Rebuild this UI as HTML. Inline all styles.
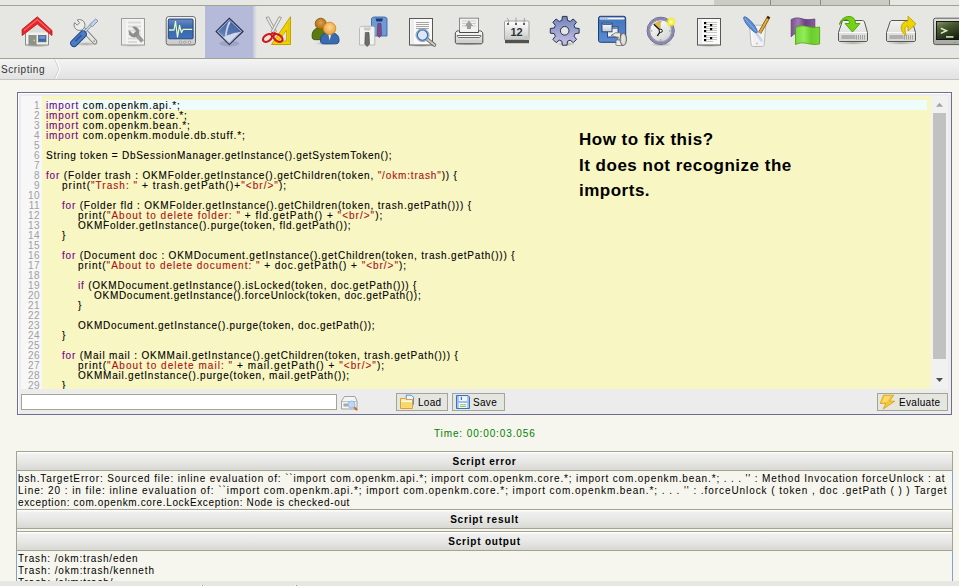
<!DOCTYPE html>
<html><head><meta charset="utf-8">
<style>
*{margin:0;padding:0;box-sizing:border-box}
html,body{width:959px;height:586px;overflow:hidden;background:#f6f6ee;font-family:"Liberation Sans",sans-serif;position:relative}
.abs{position:absolute}
#topstrip{left:0;top:0;width:959px;height:5px;background:#e6e6e2}
.tab{position:absolute;top:0;height:5px;background:#cbccc5;border-right:1px solid #8a8a80}
#l1{left:0;top:5px;width:959px;height:1px;background:#a2a390}
#toolbar{left:0;top:6px;width:959px;height:52px;background:#e6e7e2}
#sel{left:205px;top:6px;width:48px;height:52px;background:#b5bad8}
#l2{left:0;top:58px;width:959px;height:1px;background:#a2a390}
#crumb{left:0;top:59px;width:959px;height:20px;background:linear-gradient(#f4f4f4,#e2e2e2)}
#l3{left:0;top:79px;width:959px;height:1px;background:#c4c4c6}
#crumbtxt{left:1px;top:64px;font-size:10px;line-height:12px;color:#333;letter-spacing:0.57px}
#editor{left:17px;top:92px;width:935px;height:323px;border:1px solid #6e6e92;background:#ececec}
#editor:before{content:"";position:absolute;left:0;top:0;right:0;bottom:0;border-top:1px solid #fff;border-left:1px solid #fff}
#gutter{left:21px;top:96px;width:21px;height:293px;background:#f7f7f7}
#code{left:42px;top:96px;width:889px;height:293px;background:#f8f6c3;overflow:hidden}
#hl{left:4px;top:4px;width:881px;height:10px;background:#effcfc}
.ln{position:absolute;left:0;width:19px;text-align:right;font-size:10px;letter-spacing:0.4px;line-height:10px;color:#a0a0a0}
.cl{position:absolute;font-family:"Liberation Sans",sans-serif;font-size:10px;line-height:10px;letter-spacing:0.8px;color:#000;white-space:pre;-webkit-text-stroke:0.1px currentColor}
.k{color:#770088}.s{color:#aa1111}
#note{left:579px;top:127px;font-weight:bold;font-size:17px;line-height:25.5px;color:#000;letter-spacing:0.5px}
#sb{left:931px;top:96px;width:17px;height:293px;background:#f1f1f1}
#thumb{left:933px;top:113px;width:13px;height:246px;background:#c1c1c1}
#input{left:21px;top:394px;width:316px;height:16px;background:#fff;border:1px solid #a5a595}
.btn{position:absolute;top:393px;height:18px;border:1px solid #a5a595;background:#e6e6e0;font-size:10px;line-height:12px;color:#000;letter-spacing:0.3px}
.btn span{position:absolute;top:3px}
#time{left:434px;top:428px;font-size:10px;line-height:12px;color:#008000;letter-spacing:0.88px}
.hdr{position:absolute;left:16px;width:937px;height:20px;border:1px solid #a2a390;background:linear-gradient(#fdfdfb 0px,#fdfdfb 1px,#f0f0f0 2px,#e8e8e6 50%,#d8d8d4 100%);text-align:center;font-weight:bold;font-size:10px;line-height:18px;padding-top:1px;color:#000;letter-spacing:0.8px}
.cnt{position:absolute;left:16px;width:937px;border-left:1px solid #7ea6cc;border-right:1px solid #7ea6cc;background:#f6f6ee}
.tl{position:absolute;left:18px;font-size:10px;line-height:12px;color:#000;white-space:pre}
#bottom{left:0;top:581px;width:959px;height:5px;background:#e6e6e2}
</style></head><body>
<div id="topstrip" class="abs"></div>
<div class="tab" style="left:714px;width:57px"></div>
<div class="tab" style="left:771px;width:50px"></div>
<div class="tab" style="left:821px;width:69px"></div>
<div id="l1" class="abs"></div>
<div id="toolbar" class="abs"></div>
<div id="sel" class="abs"></div>
<div class="abs" style="left:253px;top:6px;width:4px;height:52px;background:linear-gradient(90deg,#c4c7da,#e6e7e2)"></div>
<svg class="abs" style="left:0;top:0" width="959" height="58" viewBox="0 0 959 58">
<defs>
<linearGradient id="gBlueScr" x1="0" y1="0" x2="0" y2="1"><stop offset="0" stop-color="#6a8cc4"/><stop offset="0.45" stop-color="#3a66a8"/><stop offset="1" stop-color="#3e72bc"/></linearGradient>
<linearGradient id="gGray" x1="0" y1="0" x2="0" y2="1"><stop offset="0" stop-color="#ffffff"/><stop offset="1" stop-color="#c8c8c6"/></linearGradient>
<linearGradient id="gDrive" x1="0" y1="0" x2="0" y2="1"><stop offset="0" stop-color="#f2f2f2"/><stop offset="1" stop-color="#d6d6d4"/></linearGradient>
<linearGradient id="gDiamond" x1="0.7" y1="0" x2="0.3" y2="1"><stop offset="0" stop-color="#3c5c9c"/><stop offset="0.6" stop-color="#5a78b4"/><stop offset="1" stop-color="#a8b6d4"/></linearGradient>
<linearGradient id="gGear" x1="0" y1="0" x2="0" y2="1"><stop offset="0" stop-color="#6f84bc"/><stop offset="1" stop-color="#c9c2e4"/></linearGradient>
<linearGradient id="gWin" x1="0" y1="0" x2="0" y2="1"><stop offset="0" stop-color="#4474b8"/><stop offset="1" stop-color="#5a8ad0"/></linearGradient>
<linearGradient id="gTerm" x1="0" y1="0" x2="0.6" y2="1"><stop offset="0" stop-color="#8a9a6c"/><stop offset="0.35" stop-color="#4c5c34"/><stop offset="1" stop-color="#161e0c"/></linearGradient>
<linearGradient id="gTermFrame" x1="0" y1="0" x2="0" y2="1"><stop offset="0" stop-color="#e0e0de"/><stop offset="1" stop-color="#a4a4a2"/></linearGradient>
<linearGradient id="gGreenFlag" x1="0" y1="0" x2="1" y2="0"><stop offset="0" stop-color="#76d83c"/><stop offset="0.35" stop-color="#92ec58"/><stop offset="0.65" stop-color="#6ccc2c"/><stop offset="1" stop-color="#7ad83a"/></linearGradient>
<linearGradient id="gPurpleFlag" x1="0" y1="0" x2="1" y2="0"><stop offset="0" stop-color="#7c5090"/><stop offset="0.3" stop-color="#a07ab4"/><stop offset="0.6" stop-color="#6a4080"/><stop offset="1" stop-color="#8a5ea0"/></linearGradient>
<radialGradient id="gHeadB" cx="0.5" cy="0.4" r="0.6"><stop offset="0" stop-color="#e0a050"/><stop offset="1" stop-color="#a86a10"/></radialGradient>
<radialGradient id="gHeadO" cx="0.5" cy="0.4" r="0.6"><stop offset="0" stop-color="#fcd49a"/><stop offset="1" stop-color="#eea032"/></radialGradient>
<radialGradient id="gGlow" cx="0.5" cy="0.5" r="0.5"><stop offset="0" stop-color="#ffffd0"/><stop offset="0.5" stop-color="#f4f030"/><stop offset="1" stop-color="#e8e820" stop-opacity="0"/></radialGradient>
<linearGradient id="gFace" x1="0.2" y1="0" x2="0.8" y2="1"><stop offset="0" stop-color="#ffffff"/><stop offset="1" stop-color="#d2d2d0"/></linearGradient>
<radialGradient id="gShadow" cx="0.5" cy="0.5" r="0.5"><stop offset="0" stop-color="#000" stop-opacity="0.28"/><stop offset="1" stop-color="#000" stop-opacity="0"/></radialGradient>
</defs>

<!-- 0 home -->
<g transform="translate(21,13)">
<ellipse cx="16" cy="32.5" rx="13" ry="2" fill="url(#gShadow)"/>
<path d="M4.5 32 L4.5 19 L16.3 9.5 L27.5 19 L27.5 32 Z" fill="#f0f0ee" stroke="#8a8c88" stroke-width="1"/>
<path d="M5.5 19.5 L16.3 11 L26.5 19.5 Z" fill="#dcdcda"/>
<rect x="7.5" y="22" width="8" height="10" fill="#888a85"/>
<rect x="8.5" y="22" width="6" height="10" fill="#8f918c"/>
<circle cx="13.3" cy="27.4" r="0.8" fill="#f0e030"/>
<rect x="17.5" y="22.5" width="7.5" height="6.3" fill="#3868b0" stroke="#666" stroke-width="0.8"/>
<rect x="18.2" y="23.2" width="6" height="2.5" fill="#7098d0"/>
<path d="M1 16.5 L16.3 3.8 L31 17.5 L31 22.5 L16.3 11 L1.2 22.5 Z" fill="#e8262a" stroke="#b8141a" stroke-width="0.8" stroke-linejoin="round"/>
<path d="M3 17.5 L16.3 6.5 L29 18" fill="none" stroke="#f46868" stroke-width="1.2"/>
</g>

<!-- 1 tools -->
<g transform="translate(69,13)">
<ellipse cx="17" cy="31" rx="13" ry="2" fill="url(#gShadow)"/>
<path d="M12 14 L25.8 28.8" stroke="#7a7c78" stroke-width="5.2" stroke-linecap="round"/>
<path d="M12 14 L25.8 28.8" stroke="#e6e6e4" stroke-width="3.4" stroke-linecap="round"/>
<circle cx="25.2" cy="28.2" r="0.9" fill="#9a9a98"/>
<path d="M8.1 7.05 A5.5 5.5 0 1 1 5.55 9.6 L8.17 12.21 L10.71 9.67 Z" fill="#ececea" stroke="#7a7c78" stroke-width="0.9" stroke-linejoin="round"/>
<path d="M13 21.5 L23 11" stroke="#7890b8" stroke-width="2.6" stroke-linecap="round"/>
<path d="M13 21.5 L23 11" stroke="#ccd8ec" stroke-width="1.3" stroke-linecap="round"/>
<path d="M21 11.5 L26.8 5.8 L29 8 L23.2 13.8 Z" fill="#c4d2ea" stroke="#7890b8" stroke-width="0.9" stroke-linejoin="round"/>
<path d="M5 30.2 L14 21.2" stroke="#1e4684" stroke-width="7.6" stroke-linecap="round"/>
<path d="M5 30.2 L14 21.2" stroke="#4c7cc4" stroke-width="5.8" stroke-linecap="round"/>
<path d="M6.8 27.8 L12 22.6" stroke="#2a5494" stroke-width="1.6" stroke-linecap="round"/>
</g>

<!-- 2 doc wrench (faded) -->
<g transform="translate(117,13)">
<ellipse cx="16" cy="32.5" rx="13" ry="1.6" fill="url(#gShadow)" opacity="0.6"/>
<rect x="4.5" y="5.5" width="23" height="26.5" fill="#f4f4f2" stroke="#9c9c9a" stroke-width="1"/>
<rect x="5.5" y="6.5" width="3.5" height="24.5" fill="#ebebe9"/>
<g stroke="#dadad8" stroke-width="1.8"><path d="M11 9.5H24M11 13.5H24M11 17.5H24M11 21.5H24M11 25.5H24M11 29H20"/></g>
<path d="M19 21.2 L25.5 28.5" stroke="#9a9a98" stroke-width="4" stroke-linecap="butt"/>
<path d="M15.07 13.96 A5.4 5.4 0 1 1 11.96 17.07 L16.01 21.12 L19.12 18.01 Z" fill="#8e8e8c"/>
</g>

<!-- 3 monitor -->
<g transform="translate(165,13)">
<rect x="1.2" y="3.6" width="29.3" height="28.4" rx="2.5" fill="url(#gGray)" stroke="#6a6a68" stroke-width="1"/>
<rect x="3.3" y="6" width="24.8" height="19.8" rx="1" fill="url(#gBlueScr)" stroke="#1a3a78" stroke-width="0.9"/>
<path d="M4 17 L9 17 L10.5 8.5 L12.5 24 L14.5 12.5 L16.5 19.5 L18.2 16.3 L27.3 16.3" fill="none" stroke="#e4f8c0" stroke-width="1.3" stroke-linejoin="round"/>
<g fill="#e8e8e6" stroke="#8a8a88" stroke-width="0.7"><circle cx="15.5" cy="29.2" r="1.2"/><rect x="18.5" y="28.2" width="2.6" height="2" rx="1"/><circle cx="24.5" cy="29.2" r="1.2"/></g>
</g>

<!-- 4 diamond (selected) -->
<g transform="translate(213,13)">
<ellipse cx="16.3" cy="30.5" rx="10" ry="3" fill="#8d92b8" opacity="0.55"/>
<path d="M16.3 5.2 L30.1 18.4 L16.3 31.6 L3.1 18.4 Z" fill="url(#gDiamond)" stroke="#2a3048" stroke-width="1.1" stroke-linejoin="miter"/>
<path d="M16.3 6.8 L28.5 18.4 L16.3 30 L4.7 18.4 Z" fill="none" stroke="#c8d0e4" stroke-width="0.7"/>
<path d="M16.2 8 C14.2 10.5 13 15.5 11.8 22.5 L13.6 23 C14.2 18.5 15.2 13.8 17.6 9.2 Z" fill="#c9d2e6"/>
<path d="M10.5 24.5 L12.8 22.5 C14.5 23 15.8 21 17.5 21.5 C19 20 20.5 20.8 21.8 19.8 C23.2 20 24.8 19.2 26.5 18.9 L28 18.4 L16.3 29.6 Z" fill="#d2d9ea"/>
</g>

<!-- 5 scissors + set square -->
<g transform="translate(261,13)">
<path d="M29.5 3.7 L29.5 31.5 L10.5 31.5 Z" fill="#edd400" stroke="#c4a000" stroke-width="1" stroke-linejoin="round"/>
<path d="M25.5 17 L25.5 28 L17.5 28 Z" fill="#e5e5e0" stroke="#c4a000" stroke-width="0.8"/>
<g stroke="#e0c000" stroke-width="0.8"><path d="M27.3 8V29.5M29 10h-1.5M29 13h-1.5M29 16h-1.5M29 19h-1.5M29 22h-1.5M29 25h-1.5M29 28h-1.5"/></g>
<path d="M5 4.5 L7.5 3.8 L15.5 18.5 L13.5 20 Z" fill="#e8e8e6" stroke="#8a8a88" stroke-width="0.8"/>
<path d="M20.5 4.5 L18 3.8 L10 18.5 L12 20 Z" fill="#e8e8e6" stroke="#8a8a88" stroke-width="0.8"/>
<ellipse cx="6.5" cy="25" rx="5" ry="3.2" transform="rotate(-35 6.5 25)" fill="none" stroke="#d41418" stroke-width="2.2"/>
<ellipse cx="17" cy="25" rx="5" ry="3.2" transform="rotate(35 17 25)" fill="none" stroke="#d41418" stroke-width="2.2"/>
<path d="M10.5 19.5 L12 21 M14.5 19.5 L12.8 21" stroke="#d41418" stroke-width="2"/>
</g>

<!-- 6 users -->
<g transform="translate(309,13)">
<ellipse cx="18" cy="30.5" rx="13" ry="1.8" fill="url(#gShadow)"/>
<path d="M3.2 24 C2.5 18 6.5 14.5 11.5 14.5 C16.5 14.5 19.5 18 19 24 C19 26 17.5 26.7 16 26.7 L6.5 26.7 C4.5 26.7 3.2 26 3.2 24 Z" fill="#5c7a12" stroke="#3c5008" stroke-width="0.9"/>
<circle cx="11.7" cy="10.7" r="5.5" fill="url(#gHeadB)" stroke="#8f5902" stroke-width="0.9"/>
<path d="M11.5 28 C11 22 15 19.5 20.7 19.5 C26.5 19.5 30.5 22 30 28 C30 30 28.5 30.8 26.5 30.8 L15 30.8 C13 30.8 11.5 30 11.5 28 Z" fill="#3a6ab0" stroke="#1f4a88" stroke-width="0.9"/>
<path d="M19.2 21 L20.7 27.5 L22.2 21 Z" fill="#f4f4f4"/>
<circle cx="20.6" cy="15.4" r="6.2" fill="url(#gHeadO)" stroke="#d08a1c" stroke-width="0.9"/>
</g>

<!-- 7 shirts -->
<g transform="translate(357,13)">
<path d="M14.5 6 C14.5 4.5 16 4 18 4 L26.5 4 C28.5 4 30 4.5 30 6 L30 23 L14.5 23 Z" fill="#6f9bd4" stroke="#3a68a8" stroke-width="0.9"/>
<path d="M18.5 5.5 L26 5.5 L25 8.5 L19.5 8.5 Z" fill="#1a3a78"/>
<path d="M20.8 10.5 L24 10.5 L24.5 22 L22.4 24.5 L20.3 22 Z" fill="#7d4c8a" stroke="#5c3466" stroke-width="0.6"/>
<path d="M2.5 15.5 C2.5 14 4 13.3 6 13.3 L14.5 13.3 C16.5 13.3 17.8 14 17.8 15.5 L17.8 32 L2.5 32 Z" fill="#f2f2f0" stroke="#b4b6b0" stroke-width="0.9"/>
<path d="M6.5 14.5 L14 14.5 L13 17.5 L7.5 17.5 Z" fill="#c8c8c6"/>
<path d="M8.3 19.5 L12 19.5 L12.5 31 L10.2 33.5 L7.8 31 Z" fill="#6c6e6a" stroke="#444" stroke-width="0.6"/>
</g>

<!-- 8 doc search -->
<g transform="translate(405,13)">
<ellipse cx="16" cy="32.5" rx="13" ry="1.6" fill="url(#gShadow)"/>
<rect x="4.5" y="5.5" width="23" height="26.5" fill="#fafafa" stroke="#585856" stroke-width="1"/>
<rect x="5.5" y="6.5" width="3.5" height="24.5" fill="#eeeeec"/>
<g stroke="#9a9a98" stroke-width="0.9"><path d="M11 9.5H24M11 11.5H24M11 13.5H24M11 15.5H24"/></g>
<path d="M22.5 26.5 L29.5 32" stroke="#6a6a68" stroke-width="3.6" stroke-linecap="round"/>
<path d="M22.5 26.5 L29.5 32" stroke="#c8c8c6" stroke-width="2" stroke-linecap="round"/>
<circle cx="17.5" cy="22.1" r="6.5" fill="#e6e6e4" stroke="#8a8a88" stroke-width="0.8"/>
<circle cx="17.5" cy="22.1" r="5.2" fill="#dce8f6" stroke="#3a70c0" stroke-width="1.3"/>
</g>

<!-- 9 printer -->
<g transform="translate(453,13)">
<ellipse cx="16" cy="31" rx="14" ry="1.6" fill="url(#gShadow)"/>
<rect x="6.5" y="5.2" width="19" height="15" fill="#f2f2f0" stroke="#8a8a88" stroke-width="1"/>
<g stroke="#c8c8c6" stroke-width="0.9"><path d="M9 8H23M9 10.5H23M9 13H23"/></g>
<path d="M16 7.5 L20 13 L18 13 L18 16 L14 16 L14 13 L12 13 Z" fill="#9c9c9a"/>
<path d="M2.3 21 C2.3 19 3.5 17.8 5.5 17.8 L6.5 17.8 L6.5 19.5 L25.5 19.5 L25.5 17.8 L26.5 17.8 C28.5 17.8 29.8 19 29.8 21 L29.8 29 C29.8 30 29 30.8 28 30.8 L4 30.8 C3 30.8 2.3 30 2.3 29 Z" fill="url(#gGray)" stroke="#4a4a48" stroke-width="1"/>
<path d="M4.2 22.5 L27.8 22.5 C27.8 24 27 24.5 26 24.5 L6 24.5 C5 24.5 4.2 24 4.2 22.5 Z" fill="#fafafa" stroke="#5a5a58" stroke-width="0.9"/>
<path d="M3 27.5 H29" stroke="#d0d0ce" stroke-width="1"/>
</g>

<!-- 10 calendar -->
<g transform="translate(501,13)">
<rect x="3.5" y="8" width="24.5" height="19" rx="1" fill="url(#gGray)" stroke="#9a9a98" stroke-width="0.9"/>
<rect x="4" y="27" width="24" height="3.2" fill="#505250"/>
<path d="M23 23 L28 23 L28 27 L23 27 Z" fill="#c6c6c4"/>
<g fill="#2e3436"><circle cx="7" cy="11" r="1"/><circle cx="15" cy="11" r="1"/><circle cx="23" cy="11" r="1"/></g>
<g stroke="#9a9a98" stroke-width="0.9" fill="none"><path d="M6 6 C6 5 8 5 7.5 10"/><path d="M15 4.5 V10"/><path d="M23.5 5 L23 10"/></g>
<text x="15.5" y="22.5" text-anchor="middle" font-family="Liberation Sans" font-weight="bold" font-size="11" fill="#2e3436">12</text>
</g>

<!-- 11 gear -->
<g transform="translate(549,13)">
<ellipse cx="17" cy="31" rx="10" ry="2" fill="url(#gShadow)"/>
<path d="M12.92 7.36 L13.37 3.39 L18.03 3.39 L18.48 7.36 L21.12 8.46 L24.25 5.96 L27.54 9.25 L25.04 12.38 L26.14 15.02 L30.11 15.47 L30.11 20.13 L26.14 20.58 L25.04 23.22 L27.54 26.35 L24.25 29.64 L21.12 27.14 L18.48 28.24 L18.03 32.21 L13.37 32.21 L12.92 28.24 L10.28 27.14 L7.15 29.64 L3.86 26.35 L6.36 23.22 L5.26 20.58 L1.29 20.13 L1.29 15.47 L5.26 15.02 L6.36 12.38 L3.86 9.25 L7.15 5.96 L10.28 8.46 Z" fill="url(#gGear)" stroke="#2a3050" stroke-width="1"/>
<circle cx="15.7" cy="17.8" r="4.3" fill="#e6e6e0" stroke="#2a3050" stroke-width="1"/>
</g>

<!-- 12 window -->
<g transform="translate(597,13)">
<rect x="1.5" y="3.3" width="27.2" height="26" rx="2" fill="url(#gWin)" stroke="#1d3f7a" stroke-width="1"/>
<rect x="2.6" y="4.4" width="25" height="2.2" rx="1" fill="#f4f4f4"/>
<path d="M3.5 5.5 H11" stroke="#8a8a8a" stroke-width="0.7" stroke-dasharray="1.2 0.6"/>
<rect x="10.5" y="14" width="10.5" height="10" fill="#f0f0f0" stroke="#1d3f7a" stroke-width="0.9"/>
<path d="M11.2 15.3 H20.3" stroke="#2a5aa0" stroke-width="0.9"/>
<rect x="5" y="10.2" width="10" height="8.6" fill="url(#gGray)" stroke="#1d3f7a" stroke-width="0.9"/>
<path d="M5.6 11.5 H14.4" stroke="#2a5aa0" stroke-width="0.9"/>
<path d="M14 22.5 L18.5 19.8 L23.5 19.8 L23.5 27 L20 27 L21.5 24.5 Z" fill="#e8e8e6" stroke="#6a6a68" stroke-width="0.8" stroke-linejoin="round"/>
<path d="M19 27 L26 27 L26 32.5 L20 32.5 C18.8 32.5 18.5 31.5 19 30.5 Z" fill="#ececea" stroke="#6a6a68" stroke-width="0.8"/>
<ellipse cx="26.3" cy="26.3" rx="3.2" ry="6.2" fill="#cfcfcd" stroke="#5a5a58" stroke-width="0.9"/>
<ellipse cx="26.3" cy="26.3" rx="1.6" ry="4.2" fill="#e2e2e0"/>
</g>

<!-- 13 clock -->
<g transform="translate(645,13)">
<ellipse cx="16" cy="31.5" rx="11" ry="2" fill="url(#gShadow)"/>
<circle cx="15.7" cy="17.8" r="13.6" fill="#dcdcda" stroke="#5e5a88" stroke-width="1"/>
<circle cx="15.7" cy="17.8" r="12.2" fill="none" stroke="#8a86b0" stroke-width="2.2"/>
<circle cx="15.7" cy="17.8" r="10.9" fill="url(#gFace)" stroke="#6a6890" stroke-width="0.6"/>
<path d="M15.7 17.8 L15.7 7.8 C13 8 10.6 9.2 8.7 11 Z" fill="#d8b84c"/>
<g fill="#a8a8a6"><circle cx="15.7" cy="8.6" r="0.9"/><circle cx="15.7" cy="27" r="0.9"/><circle cx="6.5" cy="17.8" r="0.9"/><circle cx="24.9" cy="17.8" r="0.9"/></g>
<path d="M15.7 17.8 L8.8 11.2 M15.7 17.8 L12.3 23" stroke="#101010" stroke-width="1.3"/>
<circle cx="15.7" cy="17.8" r="1.6" fill="#fff" stroke="#101010" stroke-width="1"/>
<circle cx="26" cy="9" r="5.5" fill="url(#gGlow)"/>
</g>

<!-- 14 list doc -->
<g transform="translate(693,13)">
<ellipse cx="16" cy="32.5" rx="13" ry="1.6" fill="url(#gShadow)"/>
<rect x="4.5" y="5.5" width="23" height="26.5" fill="#fafafa" stroke="#585856" stroke-width="1"/>
<rect x="5.5" y="6.5" width="3.5" height="24.5" fill="#eeeeec"/>
<g stroke="#b8b8b6" stroke-width="0.8"><path d="M13 9.5H24M13 11.5H24M13 13.5H24M13 15.5H24M13 17.5H24M13 19.5H24M13 22.5H24M13 24.5H24M13 26.5H24M13 28.5H20"/></g>
<g fill="#000"><rect x="11" y="9" width="2.2" height="2.2"/><rect x="17" y="11" width="2.2" height="2.2"/><rect x="11" y="13" width="2.2" height="2.2"/><rect x="17" y="15" width="2.2" height="2.2"/><rect x="11" y="17" width="2.2" height="2.2"/><rect x="11" y="22" width="2.2" height="2.2"/><rect x="17" y="24" width="2.2" height="2.2"/><rect x="11" y="26" width="2.2" height="2.2"/></g>
</g>

<!-- 15 pen cup -->
<g transform="translate(741,13)">
<ellipse cx="16.5" cy="33" rx="8" ry="1.4" fill="url(#gShadow)"/>
<path d="M8.5 12.2 L24.8 12.2 L23.2 31.5 C23 32.8 22 33.5 20.8 33.5 L12.5 33.5 C11.3 33.5 10.3 32.8 10.1 31.5 Z" fill="#f2f2f2" stroke="#b4b4b2" stroke-width="0.9"/>
<path d="M10 13 L11.5 31" stroke="#ffffff" stroke-width="1"/>
<path d="M27.9 3.6 L18.6 20" stroke="#6a4a08" stroke-width="3.4" stroke-linecap="butt"/>
<path d="M27.9 3.6 L18.6 20" stroke="#e3a838" stroke-width="2.2" stroke-linecap="butt"/>
<path d="M27.9 3.6 L26.8 5.6" stroke="#3a2a08" stroke-width="2.6"/>
<path d="M13.5 17.5 C15.5 20.5 18 24 20.5 27.5" stroke="#c6d6ee" stroke-width="2.6" stroke-linecap="round"/>
<ellipse cx="9.5" cy="11.8" rx="10.2" ry="2.7" transform="rotate(50 9.5 11.8)" fill="#5c8cd0" stroke="#3868b0" stroke-width="0.8"/>
<path d="M3.5 5 L15 18" stroke="#9ab8e4" stroke-width="0.8"/>
<circle cx="16" cy="30.5" r="1.1" fill="#f0b4b4"/>
</g>

<!-- 16 flags -->
<g transform="translate(789,13)">
<path d="M2.2 6.5 C6 4.5 9.5 4.5 13 5.8 C17 7 21 6.8 25.8 6 L25.8 20 C21 21 17 21 13 20 C9.5 19 6 19.5 2.2 23.8 Z" fill="url(#gPurpleFlag)" stroke="#5c3a70" stroke-width="0.8"/>
<path d="M6.5 14.5 C10 12.5 14.5 12.5 18.5 13.5 C22.5 14.5 26.5 14.8 30.6 14 L30.6 31 C26.5 31.8 22.5 31.5 18.5 30.5 C14.5 29.5 10 29.5 6.5 31.5 Z" fill="url(#gGreenFlag)" stroke="#4e9a06" stroke-width="0.8"/>
</g>

<!-- 17 drive green arrow -->
<g transform="translate(837,13)">
<ellipse cx="16" cy="30" rx="14" ry="1.8" fill="url(#gShadow)"/>
<path d="M7 7.5 L25.5 7.5 C26.5 7.5 27 8 27.5 9 L30.5 19.5 L30.5 27 C30.5 28 30 28.5 29 28.5 L3 28.5 C2 28.5 1.5 28 1.5 27 L1.5 19.5 L5 9 C5.5 8 6 7.5 7 7.5 Z" fill="url(#gDrive)" stroke="#555753" stroke-width="1"/>
<path d="M2 19.5 H30" stroke="#fff" stroke-width="0.8"/>
<rect x="4.5" y="22" width="14" height="4" fill="#b0b0ae"/>
<g stroke="#8a8a88" stroke-width="0.7"><path d="M19.5 22V26.5M21.5 22V26.5M23.5 22V26.5M25.5 22V26.5M27.5 22V26.5"/></g>
<path d="M2.5 11.5 C3.5 6 8 3.5 12 3.5 C16 3.5 18.5 6 18.5 10.5 L23 10.5 L15.5 19 L8 10.5 L12.5 10.5 C12.5 8 11 6.5 9 6.5 C6 6.5 3.5 9 2.5 11.5 Z" fill="#73d216" stroke="#4e9a06" stroke-width="0.9" stroke-linejoin="round"/>
</g>

<!-- 18 drive yellow arrow -->
<g transform="translate(885,13)">
<ellipse cx="16" cy="30" rx="14" ry="1.8" fill="url(#gShadow)"/>
<path d="M7 7.5 L25.5 7.5 C26.5 7.5 27 8 27.5 9 L30.5 19.5 L30.5 27 C30.5 28 30 28.5 29 28.5 L3 28.5 C2 28.5 1.5 28 1.5 27 L1.5 19.5 L5 9 C5.5 8 6 7.5 7 7.5 Z" fill="url(#gDrive)" stroke="#555753" stroke-width="1"/>
<path d="M2 19.5 H30" stroke="#fff" stroke-width="0.8"/>
<rect x="4.5" y="22" width="14" height="4" fill="#b0b0ae"/>
<g stroke="#8a8a88" stroke-width="0.7"><path d="M19.5 22V26.5M21.5 22V26.5M23.5 22V26.5M25.5 22V26.5M27.5 22V26.5"/></g>
<path d="M21 22.5 C17 20 15.5 16 16.5 12.5 C17.5 9.5 20 8 23 8 L23 3.2 L31 10.8 L23 18 L23 13 C20.5 13 19.5 15 20 18 C20.3 19.5 20.8 21 21 22.5 Z" fill="#edd400" stroke="#c4a000" stroke-width="0.9" stroke-linejoin="round"/>
</g>

<!-- 19 terminal (cut) -->
<g transform="translate(927,13)">
<rect x="6.5" y="5.2" width="30" height="26.4" rx="2" fill="url(#gTermFrame)" stroke="#5a5a58" stroke-width="1"/>
<rect x="9.5" y="8.5" width="27" height="18" fill="url(#gTerm)" stroke="#0a0a0a" stroke-width="0.9"/>
<path d="M13.8 15.2 L19.5 17.8 L13.8 20.4" fill="none" stroke="#d8ecc8" stroke-width="1.5"/>
<rect x="19" y="23" width="7.5" height="1.8" fill="#b8d4a8"/>
<rect x="27" y="28.5" width="1.5" height="1.5" fill="#60c040"/>
</g>
</svg>

<div id="l2" class="abs"></div>
<div id="crumb" class="abs"></div>
<div id="l3" class="abs"></div>
<div id="crumbtxt" class="abs">Scripting</div>
<svg class="abs" style="left:52px;top:59px" width="10" height="20"><path d="M2.5 0 L7 10 L2.5 20" fill="none" stroke="#cfcfcf" stroke-width="1"/><path d="M3.6 0 L8.1 10 L3.6 20" fill="none" stroke="#ffffff" stroke-width="1"/></svg>

<div id="editor" class="abs"></div>
<div id="gutter" class="abs">
<div class="ln" style="top:5px">1</div>
<div class="ln" style="top:15px">2</div>
<div class="ln" style="top:25px">3</div>
<div class="ln" style="top:35px">4</div>
<div class="ln" style="top:45px">5</div>
<div class="ln" style="top:55px">6</div>
<div class="ln" style="top:65px">7</div>
<div class="ln" style="top:75px">8</div>
<div class="ln" style="top:85px">9</div>
<div class="ln" style="top:95px">10</div>
<div class="ln" style="top:105px">11</div>
<div class="ln" style="top:115px">12</div>
<div class="ln" style="top:125px">13</div>
<div class="ln" style="top:135px">14</div>
<div class="ln" style="top:145px">15</div>
<div class="ln" style="top:155px">16</div>
<div class="ln" style="top:165px">17</div>
<div class="ln" style="top:175px">18</div>
<div class="ln" style="top:185px">19</div>
<div class="ln" style="top:195px">20</div>
<div class="ln" style="top:205px">21</div>
<div class="ln" style="top:215px">22</div>
<div class="ln" style="top:225px">23</div>
<div class="ln" style="top:235px">24</div>
<div class="ln" style="top:245px">25</div>
<div class="ln" style="top:255px">26</div>
<div class="ln" style="top:265px">27</div>
<div class="ln" style="top:275px">28</div>
<div class="ln" style="top:285px">29</div>
</div>
<div id="code" class="abs">
<div id="hl" class="abs"></div>
<div class="cl" style="top:5px;left:4px;letter-spacing:0.892px"><span class="k">import</span> com.openkm.api.*;</div>
<div class="cl" style="top:15px;left:4px;letter-spacing:0.892px"><span class="k">import</span> com.openkm.core.*;</div>
<div class="cl" style="top:25px;left:4px;letter-spacing:0.9px"><span class="k">import</span> com.openkm.bean.*;</div>
<div class="cl" style="top:35px;left:4px;letter-spacing:0.871px"><span class="k">import</span> com.openkm.module.db.stuff.*;</div>
<div class="cl" style="top:55px;left:4px;letter-spacing:0.745px">String token = DbSessionManager.getInstance().getSystemToken();</div>
<div class="cl" style="top:75px;left:4px;letter-spacing:0.845px"><span class="k">for</span> (Folder trash : OKMFolder.getInstance().getChildren(token, <span class="s">&quot;/okm:trash&quot;</span>)) {</div>
<div class="cl" style="top:85px;left:20px;letter-spacing:1.035px">print(<span class="s">&quot;Trash: &quot;</span> + trash.getPath()+<span class="s">&quot;&lt;br/&gt;&quot;</span>);</div>
<div class="cl" style="top:105px;left:20px;letter-spacing:0.801px"><span class="k">for</span> (Folder fld : OKMFolder.getInstance().getChildren(token, trash.getPath())) {</div>
<div class="cl" style="top:115px;left:36px;letter-spacing:1.015px">print(<span class="s">&quot;About to delete folder: &quot;</span> + fld.getPath() + <span class="s">&quot;&lt;br/&gt;&quot;</span>);</div>
<div class="cl" style="top:125px;left:36px;letter-spacing:0.756px">OKMFolder.getInstance().purge(token, fld.getPath());</div>
<div class="cl" style="top:135px;left:20px;letter-spacing:0.8px">}</div>
<div class="cl" style="top:155px;left:20px;letter-spacing:0.798px"><span class="k">for</span> (Document doc : OKMDocument.getInstance().getChildren(token, trash.getPath())) {</div>
<div class="cl" style="top:165px;left:36px;letter-spacing:0.97px">print(<span class="s">&quot;About to delete document: &quot;</span> + doc.getPath() + <span class="s">&quot;&lt;br/&gt;&quot;</span>);</div>
<div class="cl" style="top:185px;left:36px;letter-spacing:0.795px"><span class="k">if</span> (OKMDocument.getInstance().isLocked(token, doc.getPath())) {</div>
<div class="cl" style="top:195px;left:52px;letter-spacing:0.714px">OKMDocument.getInstance().forceUnlock(token, doc.getPath());</div>
<div class="cl" style="top:205px;left:36px;letter-spacing:0.8px">}</div>
<div class="cl" style="top:225px;left:36px;letter-spacing:0.74px">OKMDocument.getInstance().purge(token, doc.getPath());</div>
<div class="cl" style="top:235px;left:20px;letter-spacing:0.8px">}</div>
<div class="cl" style="top:255px;left:20px;letter-spacing:0.813px"><span class="k">for</span> (Mail mail : OKMMail.getInstance().getChildren(token, trash.getPath())) {</div>
<div class="cl" style="top:265px;left:36px;letter-spacing:1.046px">print(<span class="s">&quot;About to delete mail: &quot;</span> + mail.getPath() + <span class="s">&quot;&lt;br/&gt;&quot;</span>);</div>
<div class="cl" style="top:275px;left:36px;letter-spacing:0.774px">OKMMail.getInstance().purge(token, mail.getPath());</div>
<div class="cl" style="top:285px;left:20px;letter-spacing:0.8px">}</div>
</div>
<div id="sb" class="abs"></div>
<div id="thumb" class="abs"></div>
<div id="note" class="abs">How to fix this?<br>It does not recognize the<br>imports.</div>
<svg class="abs" style="left:931px;top:96px" width="17" height="293">
<path d="M5 10.8 L8.5 6.8 L12 10.8 Z" fill="#a3a3a3"/>
<path d="M5 282 L8.5 286 L12 282 Z" fill="#505050"/>
</svg>
<div id="input" class="abs"></div>
<div class="btn" style="left:396px;width:52px"><span style="left:21px">Load</span></div>
<div class="btn" style="left:452px;width:53px"><span style="left:20px">Save</span></div>
<div class="btn" style="left:877px;width:71px"><span style="left:21px">Evaluate</span></div>

<svg class="abs" style="left:338px;top:392px" width="24" height="20">
<path d="M6.5 4.5 L17 4.5 L19 9 L19 17 L3.5 17 L3.5 9 Z" fill="#f4f4f4" stroke="#9a9a9a" stroke-width="0.9"/>
<path d="M4 9.5 H18.5" stroke="#b0b0b0" stroke-width="0.8"/>
<rect x="5.5" y="11.5" width="8" height="3" fill="#a8a8a8"/>
<path d="M16.5 15.5 L18.5 17.5" stroke="#c07a30" stroke-width="2.4" stroke-linecap="round"/>
<circle cx="13.5" cy="12.5" r="3.5" fill="#bcd6f6" stroke="#8cb4ea" stroke-width="0.8"/>
</svg>
<svg class="abs" style="left:396px;top:392px" width="24" height="20">
<path d="M10.2 3.2 L15.5 3.2 L17.5 5.2 L17.5 12.5 L10.2 12.5 Z" fill="#eef4fc" stroke="#4a86d8" stroke-width="0.9"/>
<path d="M4.5 6.5 L9 6.5 L10 7.5 L16.5 7.5 L16.5 16.5 L4.5 16.5 Z" fill="#fcf0b0" stroke="#e49a36" stroke-width="1"/>
<path d="M5.2 9.5 L15.8 9.5 L15.8 15.8 L5.2 15.8 Z" fill="#f6d868"/>
<path d="M5.2 9.6 L15.8 9.6" stroke="#fff" stroke-width="0.9"/>
</svg>
<svg class="abs" style="left:452px;top:392px" width="24" height="20">
<path d="M4.5 3.5 L16 3.5 L17.5 5 L17.5 16.5 L4.5 16.5 Z" fill="#9fbeea" stroke="#3a70c8" stroke-width="1"/>
<rect x="6.8" y="4.2" width="8.4" height="4.8" fill="#f0f5fc"/>
<rect x="8.8" y="4.8" width="1.2" height="3.2" fill="#3a70c8"/>
<rect x="6.8" y="11" width="8.4" height="5" fill="#fff"/>
<path d="M7.8 12.8 H14.2 M7.8 14.6 H14.2" stroke="#6cb848" stroke-width="0.9"/>
</svg>
<svg class="abs" style="left:876px;top:392px" width="24" height="20">
<path d="M7.5 3.2 L17.8 3.2 L13.5 9.2 L18.8 9.2 L7.2 17 L9.8 11.5 L4.2 11.5 Z" fill="#f4c838" stroke="#e0a420" stroke-width="0.9" stroke-linejoin="round"/>
<path d="M8.5 4.3 L14.5 4.3 L11 9.8 L6.2 10.5 Z" fill="#fade6a"/>
</svg>
<div id="time" class="abs">Time: 00:00:03.056</div>

<div class="hdr" style="top:451px">Script error</div>
<div class="cnt" style="top:471px;height:38px"></div>
<div class="tl" style="top:473px;letter-spacing:0.866px">bsh.TargetError: Sourced file: inline evaluation of: ``import com.openkm.api.*; import com.openkm.core.*; import com.openkm.bean.*; . . . '' : Method Invocation forceUnlock : at</div>
<div class="tl" style="top:485px;letter-spacing:0.929px">Line: 20 : in file: inline evaluation of: ``import com.openkm.api.*; import com.openkm.core.*; import com.openkm.bean.*; . . . '' : .forceUnlock ( token , doc .getPath ( ) ) Target</div>
<div class="tl" style="top:497px;letter-spacing:0.65px">exception: com.openkm.core.LockException: Node is checked-out</div>
<div class="hdr" style="top:509px">Script result</div>
<div class="cnt" style="top:529px;height:2px"></div>
<div class="hdr" style="top:531px">Script output</div>
<div class="cnt" style="top:551px;height:30px"></div>
<div class="tl" style="top:553px;letter-spacing:0.82px">Trash: /okm:trash/eden</div>
<div class="tl" style="top:565px;letter-spacing:0.84px">Trash: /okm:trash/kenneth</div>
<div class="tl" style="top:577px;letter-spacing:0.84px;height:4px;overflow:hidden">Trash: /okm:trash/</div>
<div id="bottom" class="abs"></div>
<div class="abs" style="left:201px;top:585px;width:1px;height:1px;background:#fff"></div><div class="abs" style="left:202px;top:585px;width:1px;height:1px;background:#a09a8c"></div>
<div class="abs" style="left:295px;top:585px;width:1px;height:1px;background:#fff"></div><div class="abs" style="left:296px;top:585px;width:1px;height:1px;background:#a09a8c"></div>
</body></html>
